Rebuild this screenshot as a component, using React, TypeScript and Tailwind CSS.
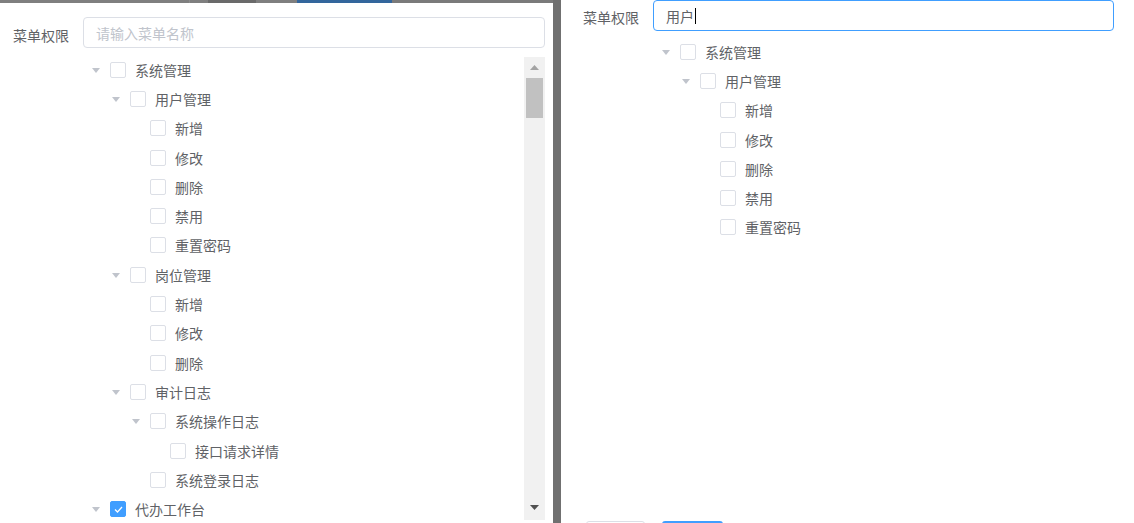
import React from 'react';

type Node = { label: string; level: number; caret?: boolean; checked?: boolean };

const leftNodes: Node[] = [
  { label: '系统管理', level: 0, caret: true },
  { label: '用户管理', level: 1, caret: true },
  { label: '新增', level: 2 },
  { label: '修改', level: 2 },
  { label: '删除', level: 2 },
  { label: '禁用', level: 2 },
  { label: '重置密码', level: 2 },
  { label: '岗位管理', level: 1, caret: true },
  { label: '新增', level: 2 },
  { label: '修改', level: 2 },
  { label: '删除', level: 2 },
  { label: '审计日志', level: 1, caret: true },
  { label: '系统操作日志', level: 2, caret: true },
  { label: '接口请求详情', level: 3 },
  { label: '系统登录日志', level: 2 },
  { label: '代办工作台', level: 0, caret: true, checked: true },
];

const rightNodes: Node[] = [
  { label: '系统管理', level: 0, caret: true },
  { label: '用户管理', level: 1, caret: true },
  { label: '新增', level: 2 },
  { label: '修改', level: 2 },
  { label: '删除', level: 2 },
  { label: '禁用', level: 2 },
  { label: '重置密码', level: 2 },
];

const pads = ['pl-[1px]', 'pl-[21px]', 'pl-[41px]', 'pl-[61px]'];

function Caret() {
  return (
    <svg width="8" height="5" viewBox="0 0 8 5" className="mt-[1px]">
      <polygon points="0,0 8,0 4,5" fill="#c0c4cc" />
    </svg>
  );
}

function TreeRow({ node }: { node: Node }) {
  return (
    <div className={`flex items-center h-[29.3px] shrink-0 ${pads[node.level]}`}>
      <div className="w-[24px] flex justify-center items-center">{node.caret ? <Caret /> : null}</div>
      {node.checked ? (
        <div className="ml-[2px] w-[16px] h-[16px] rounded-[2px] bg-[#409eff] border border-[#409eff] flex items-center justify-center">
          <svg width="9" height="7" viewBox="0 0 9 7">
            <polyline points="1,3.5 3.5,6 8,1" fill="none" stroke="#fff" strokeWidth="1.3" />
          </svg>
        </div>
      ) : (
        <div className="ml-[2px] w-[16px] h-[16px] rounded-[2px] bg-white border border-[#dcdfe6]" />
      )}
      <span className="ml-[9px] text-[14px] leading-none text-[#606266] whitespace-nowrap">{node.label}</span>
    </div>
  );
}

export default function App() {
  return (
    <div className="w-[1134px] h-[523px] flex bg-[#707070] overflow-hidden font-['Noto_Sans_CJK_SC','Microsoft_YaHei',sans-serif]">
      {/* Left panel */}
      <div className="w-[553px] h-full flex flex-col shrink-0">
        <div className="h-[3px] flex bg-[#7f7f7f] shrink-0">
          <div className="w-[189px]" />
          <div className="w-px bg-[#8c8c8c]" />
          <div className="w-[18px]" />
          <div className="w-[48px] bg-[#6a6a6a]" />
          <div className="w-[41px]" />
          <div className="w-[95px] bg-[#33669c]" />
          <div className="flex-1 bg-[#7a7a7a]" />
        </div>
        <div className="flex-1 bg-white flex flex-col pt-[14px] overflow-hidden">
          <div className="flex items-center pl-[13px] pr-[8px]">
            <span className="w-[57px] mr-[13px] mt-[5px] text-[14px] leading-none text-[#606266] whitespace-nowrap">菜单权限</span>
            <div className="flex-1 h-[31px] border border-[#dcdfe6] rounded-[4px] flex items-center px-[12px]">
              <span className="text-[14px] leading-none text-[#c0c4cc]">请输入菜单名称</span>
            </div>
          </div>
          <div className="mt-[9px] ml-[83px] mr-[8px] h-[463px] flex overflow-hidden">
            <div className="flex-1 flex flex-col overflow-hidden -mt-[2px]">
              {leftNodes.map((n, i) => (
                <TreeRow key={i} node={n} />
              ))}
            </div>
            <div className="w-[21px] bg-[#f1f1f1] flex flex-col shrink-0">
              <div className="h-[21px] flex items-center justify-center">
                <svg width="9" height="5" viewBox="0 0 9 5">
                  <polygon points="0,5 9,5 4.5,0" fill="#a3a3a3" />
                </svg>
              </div>
              <div className="mx-[2px] h-[40px] bg-[#c1c1c1]" />
              <div className="flex-1" />
              <div className="h-[21px] flex items-center justify-center pb-[4px]">
                <svg width="9" height="5" viewBox="0 0 9 5">
                  <polygon points="0,0 9,0 4.5,5" fill="#505050" />
                </svg>
              </div>
            </div>
          </div>
        </div>
      </div>

      {/* Gap */}
      <div className="w-[8px] h-full bg-[#707070] shrink-0" />

      {/* Right panel */}
      <div className="flex-1 h-full bg-white flex flex-col overflow-hidden">
        <div className="flex items-center pl-[22px] pr-[20px]">
          <span className="w-[57px] mr-[13px] mt-[2px] text-[14px] leading-none text-[#606266] whitespace-nowrap">菜单权限</span>
          <div className="flex-1 h-[31px] border border-[#409eff] rounded-[4px] flex items-center px-[12px]">
            <span className="text-[14px] leading-none text-[#606266]">用户</span>
            <span className="ml-[1px] w-px h-[16px] bg-black" />
          </div>
        </div>
        <div className="mt-[6px] ml-[92px] flex flex-col">
          {rightNodes.map((n, i) => (
            <TreeRow key={i} node={n} />
          ))}
        </div>
        <div className="mt-auto h-[2px] flex pl-[25px] gap-[17px] overflow-hidden shrink-0">
          <div className="w-[59px] h-[10px] rounded-t-[3px] border border-[#dcdfe6]" />
          <div className="w-[61px] h-[10px] rounded-t-[3px] bg-[#409eff]" />
        </div>
      </div>
    </div>
  );
}
